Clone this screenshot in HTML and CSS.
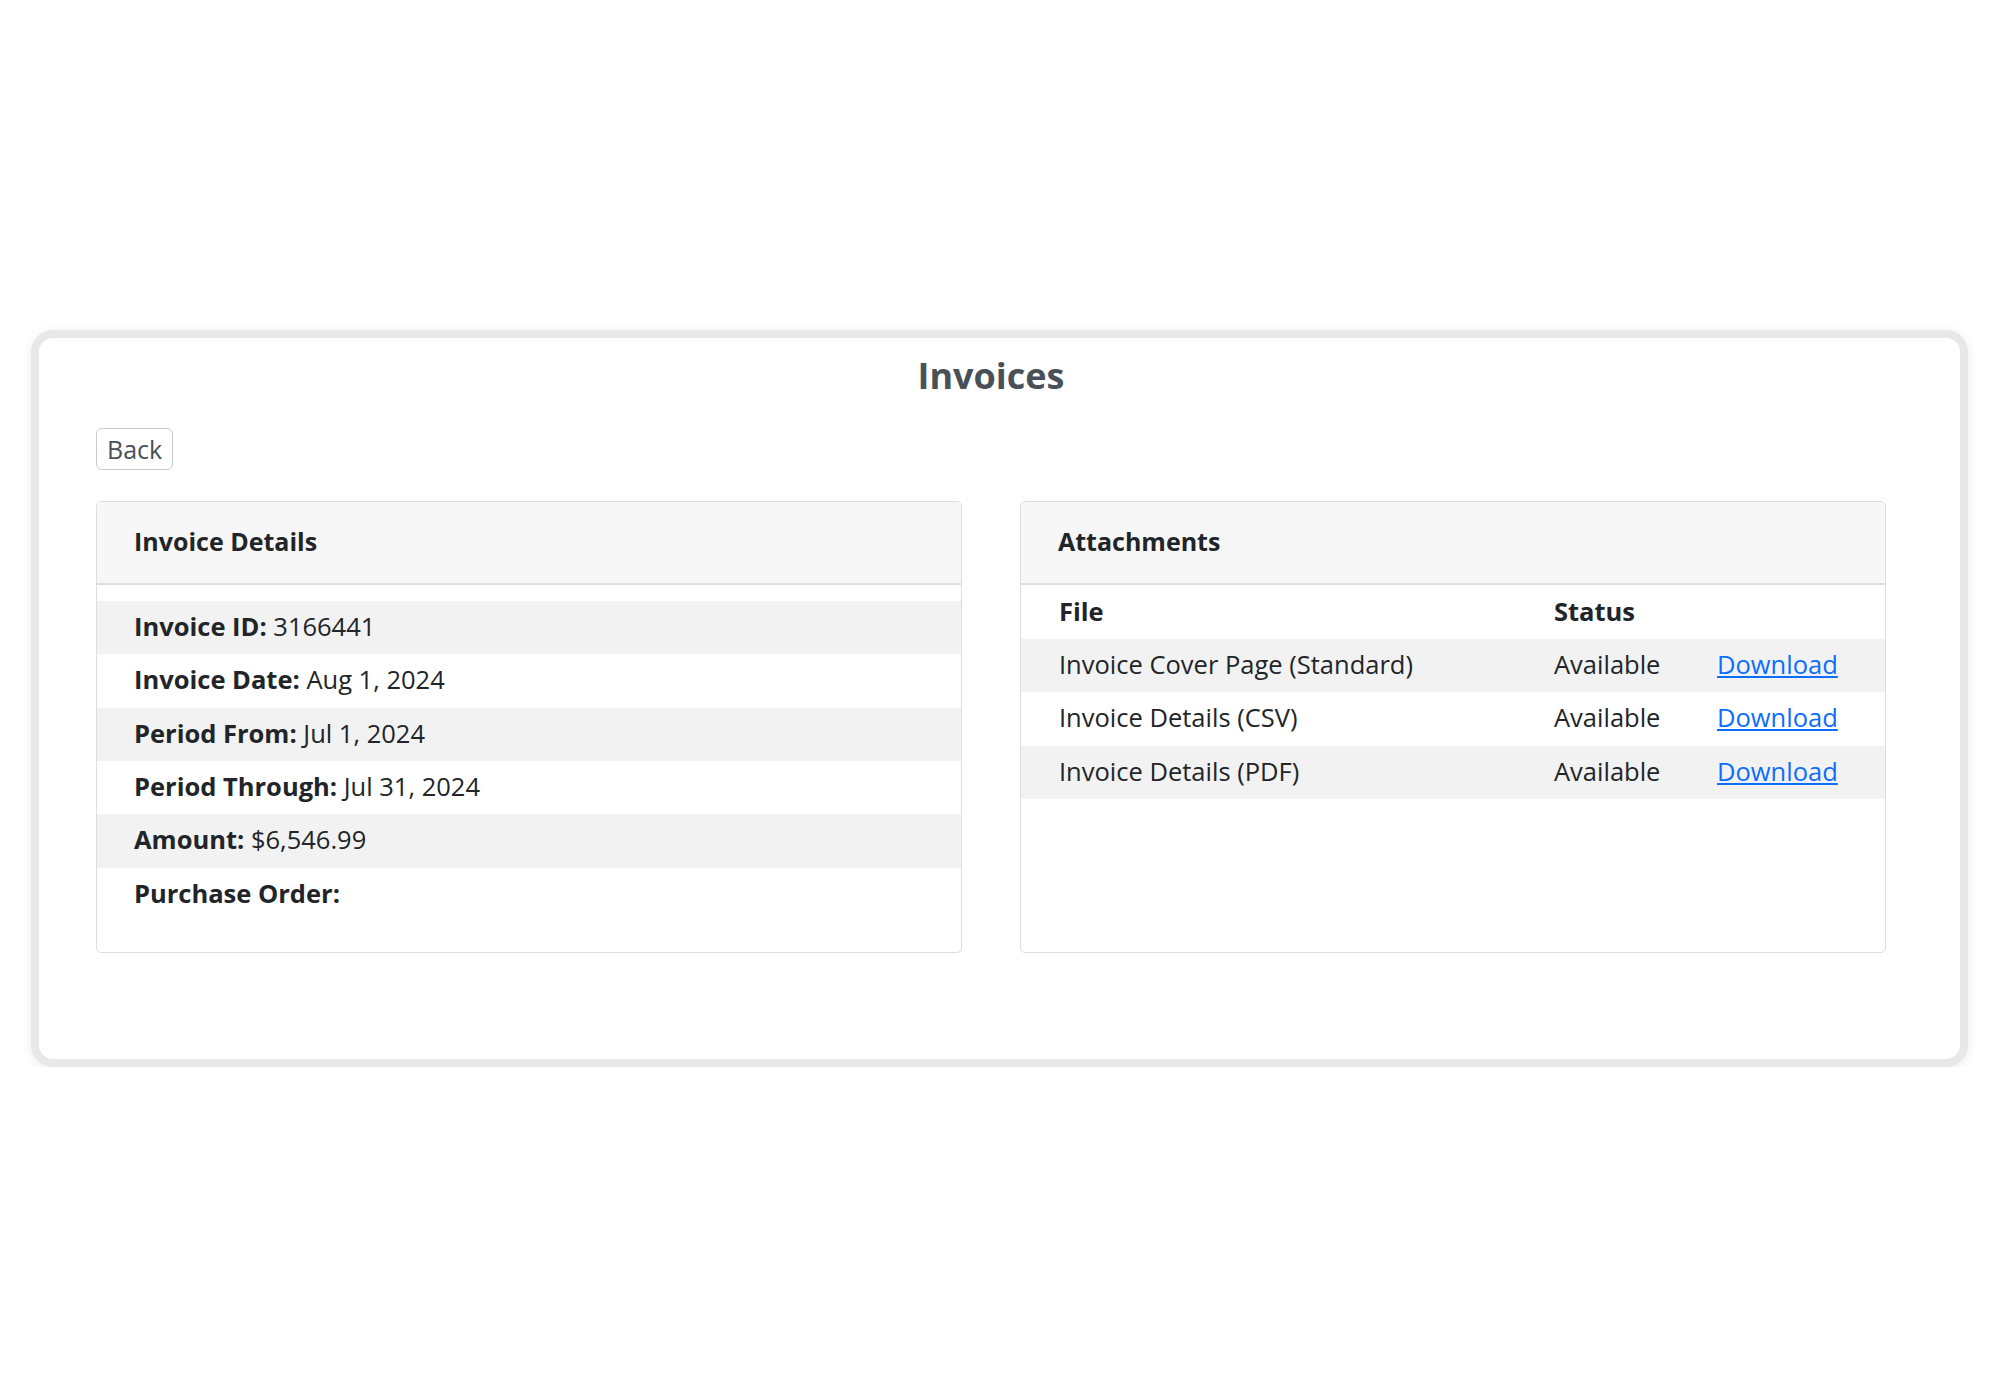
FILE: index.html
```html
<!DOCTYPE html>
<html lang="en">
<head>
<meta charset="utf-8">
<title>Invoices</title>
<link rel="stylesheet" href="styles.css">
</head>
<body>
<div class="page">
  <div class="card">
    <h1 class="title">Invoices</h1>
    <button class="back" type="button">Back</button>
    <div class="panels">
      <section class="panel">
        <div class="panel-header">Invoice Details</div>
        <ul class="details">
          <li class="row stripe"><b>Invoice ID:</b>&nbsp;3166441</li>
          <li class="row"><b>Invoice Date:</b>&nbsp;Aug 1, 2024</li>
          <li class="row stripe"><b>Period From:</b>&nbsp;Jul 1, 2024</li>
          <li class="row"><b>Period Through:</b>&nbsp;Jul 31, 2024</li>
          <li class="row stripe"><b>Amount:</b>&nbsp;$6,546.99</li>
          <li class="row"><b>Purchase Order:</b></li>
        </ul>
      </section>
      <section class="panel">
        <div class="panel-header">Attachments</div>
        <table class="files">
          <thead>
            <tr><th class="c1">File</th><th class="c2">Status</th><th class="c3"></th></tr>
          </thead>
          <tbody>
            <tr class="stripe"><td>Invoice Cover Page (Standard)</td><td>Available</td><td><a href="#">Download</a></td></tr>
            <tr><td>Invoice Details (CSV)</td><td>Available</td><td><a href="#">Download</a></td></tr>
            <tr class="stripe"><td>Invoice Details (PDF)</td><td>Available</td><td><a href="#">Download</a></td></tr>
          </tbody>
        </table>
      </section>
    </div>
  </div>
</div>
</body>
</html>
```

FILE: styles.css
```css
html, body {
  margin: 0;
  padding: 0;
  background: #ffffff;
}

body {
  font-family: "Open Sans", "Noto Sans", "Liberation Sans", sans-serif;
  color: #212529;
}

.page {
  padding: 330px 32px 0 31px;
}

.card {
  border: 8px solid #e8e8e8;
  border-radius: 22px;
  background: #ffffff;
  box-shadow: 0 2px 12px rgba(0, 0, 0, 0.08);
  padding: 16px 74px 106px 57px;
}

.title {
  margin: 0;
  text-align: center;
  font-size: 36px;
  line-height: 43px;
  font-weight: 700;
  color: #495057;
}

.back {
  display: block;
  margin-top: 31px;
  height: 42px;
  padding: 0 10px;
  font-family: inherit;
  font-size: 25px;
  line-height: 40px;
  color: #495057;
  background: #ffffff;
  border: 1px solid #c8c8c8;
  border-radius: 6px;
}

.panels {
  margin-top: 31px;
  display: grid;
  grid-template-columns: 1fr 1fr;
  column-gap: 58px;
}

.panel {
  border: 1px solid #dedede;
  border-radius: 5px;
  background: #ffffff;
  overflow: hidden;
}

.panel-header {
  background: #f7f7f7;
  border-bottom: 2px solid #dedede;
  height: 83px;
  box-sizing: border-box;
  display: flex;
  align-items: center;
  padding: 0 37px 3px;
  font-size: 25px;
  font-weight: 700;
}

.details {
  list-style: none;
  margin: 0;
  padding: 16px 0 31px;
}

.row {
  height: 53.33px;
  box-sizing: border-box;
  display: flex;
  align-items: center;
  padding: 0 37px 3px;
  font-size: 25.5px;
}

.row b {
  font-weight: 700;
}

.stripe {
  background: #f2f2f2;
}

.files {
  width: 100%;
  border-collapse: collapse;
  font-size: 25.5px;
}

.files th,
.files td {
  text-align: left;
  padding: 0 0 3px 38px;
  height: 50.33px;
  white-space: nowrap;
}

.files th {
  height: 51px;
  font-weight: 700;
}

.files .c1 {
  width: 457px;
}

.files .c2 {
  width: 125px;
}

.files a {
  color: #0d6efd;
  text-decoration: underline;
}
```
